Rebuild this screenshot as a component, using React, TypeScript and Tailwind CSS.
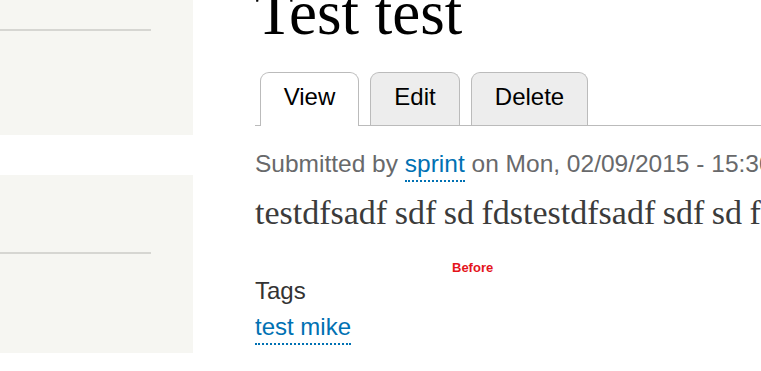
import React from "react";

const sans = { fontFamily: '"Liberation Sans", Arial, sans-serif' };

export default function App() {
  const tabs = [
    { name: "View", active: true, w: "w-[99px]" },
    { name: "Edit", active: false, w: "w-[90px]" },
    { name: "Delete", active: false, w: "w-[117px]" },
  ];

  return (
    <div className="flex h-[371px] w-[761px] overflow-hidden bg-white">
      <aside className="flex w-[193px] shrink-0 flex-col gap-[40px]">
        <div className="h-[135px] bg-[#f6f6f2]">
          <div className="mt-[29px] h-[2px] w-[151px] bg-[#d6d6d2]" />
        </div>
        <div className="h-[178px] bg-[#f6f6f2]">
          <div className="mt-[77px] h-[2px] w-[151px] bg-[#d6d6d2]" />
        </div>
      </aside>

      <main className="ml-[62px] min-w-0 flex-1" style={sans}>
        <h1 className="-mt-[18px] whitespace-nowrap font-['Liberation_Serif',Georgia,serif] text-[63px] leading-[63px] text-black">
          Test test
        </h1>

        <ul className="mt-[27px] flex items-end gap-[11px] border-b border-[#bbbbbb] pl-[5px]">
          {tabs.map((tab) => (
            <li
              key={tab.name}
              className={`${tab.w} rounded-t-[9px] border border-b-0 border-[#bbbbbb] pt-[10px] text-center text-[24px] leading-[28px] text-black ${
                tab.active ? "-mb-px h-[54px] bg-white" : "h-[53px] bg-[#ededed]"
              }`}
            >
              {tab.name}
            </li>
          ))}
        </ul>

        <p className="mt-[24px] whitespace-nowrap text-[24.5px] leading-[28px] text-[#68696b]">
          Submitted by{" "}
          <a className="border-b-2 border-dotted border-[#0071b3] pb-[3px] text-[#0071b3]">sprint</a> on Mon,
          02/09/2015 - 15:30
        </p>

        <p className="mt-[13px] whitespace-nowrap font-['Liberation_Serif',Georgia,serif] text-[34px] leading-[44px] text-[#3b3b3b] [word-spacing:-1px]">
          testdfsadf sdf sd fdstestdfsadf sdf sd fdstestdfsadf
        </p>

        <div className="mt-[25px] pl-[197px] text-[13px] font-bold leading-[16px] text-[#e4141b]">Before</div>

        <div className="mt-[1px] text-[24px] leading-[28px] text-[#333333]">Tags</div>
        <div className="mt-[8px] text-[24px] leading-[28px]">
          <a className="border-b-2 border-dotted border-[#0071b3] pb-[3px] text-[#0071b3]">test mike</a>
        </div>
      </main>
    </div>
  );
}
